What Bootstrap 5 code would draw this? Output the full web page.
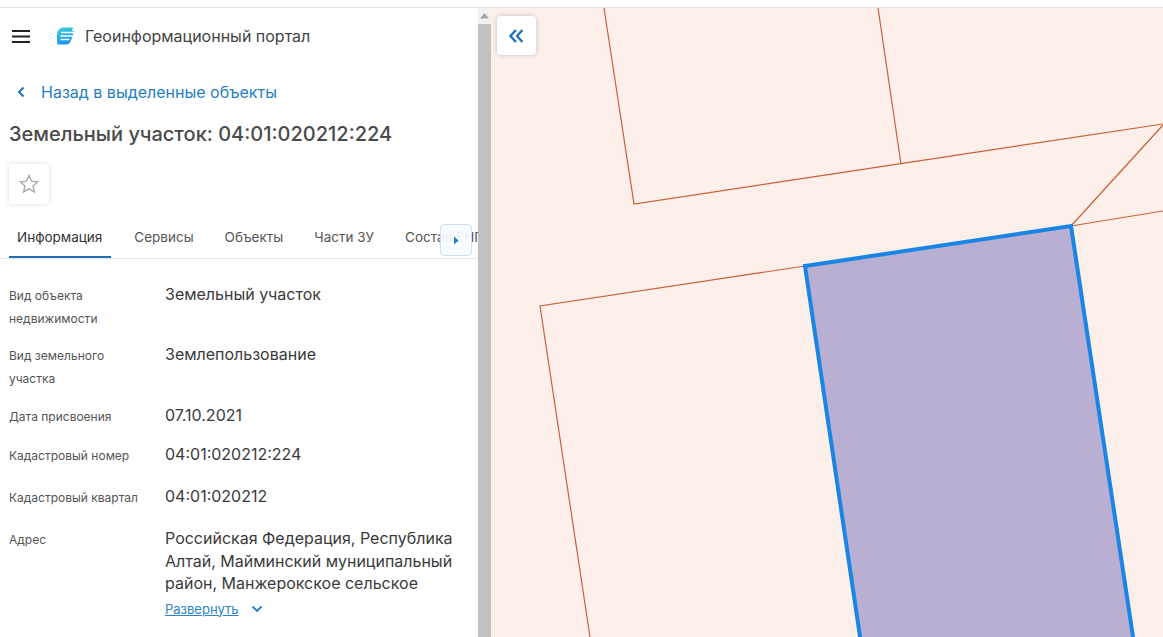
<!doctype html>
<html lang="ru">
<head>
  <meta charset="utf-8">
  <title>Геоинформационный портал</title>
  <link href="https://cdn.jsdelivr.net/npm/bootstrap@5.3.0/dist/css/bootstrap.min.css" rel="stylesheet">
  <style>
    html, body { height: 100%; overflow: hidden; }
    body { font-family: Inter, "Noto Sans", sans-serif; color: #333; background: #fff; }
    .top-strip { height: 8px; border-bottom: 1px solid #e3e3e3; }
    .app-body { height: 629px; }
    .side-panel { width: 478px; overflow: hidden; }
    .app-head { height: 56px; padding-left: 12px; }
    .app-title { font-size: 16px; color: #444; margin-left: 11px; }
    .logo-icon { margin-left: 26px; }
    .back-row { height: 40px; margin-top: 8px; padding-left: 16px; font-size: 16px; }
    .back-row a { color: #1f80c4; text-decoration: none; margin-left: 15px; }
    .obj-title { font-size: 20px; font-weight: 500; color: #4a4a4a; margin: 8px 0 0 9px; line-height: 28px; }
    .fav-btn { width: 40px; height: 40px; margin: 16px 0 0 9px; border-radius: 3px; box-shadow: 0 0 5px rgba(0,0,0,.14); }
    .tab-bar { height: 40px; margin-top: 15px; padding-left: 9px; gap: 15px; border-bottom: 1px solid #e6e9ec; white-space: nowrap; position: relative; overflow: hidden; }
    .tab-item { padding: 0 8px; font-size: 13.5px; line-height: 36px; height: 39px; color: #555; }
    .tab-item.is-active { color: #333; border-bottom: 2px solid #1f6fb5; padding-right: 9px; }
    .tab-next { position: absolute; right: 6px; top: 5px; width: 32px; height: 32px; background: rgba(247,251,255,.93); border: 1px solid #cfe2f5; border-radius: 4px; }
    .info-list { padding: 24px 0 0 9px; }
    .info-row { display: grid; grid-template-columns: 140px 1fr; column-gap: 16px; padding-right: 20px; margin-bottom: 13px; }
    .info-row.gap-s { margin-bottom: 14px; }
    .info-row.gap-m { margin-bottom: 14.5px; }
    .info-row.gap-l { margin-bottom: 17.5px; }
    .info-label { font-size: 12px; line-height: 22.5px; color: #555; padding-top: 2px; }
    .info-value { font-size: 16px; line-height: 22.5px; color: #3a3a3a; }
    .expand-row { margin-top: 3px; }
    .expand-link { font-size: 13px; color: #2a85c9; text-decoration: underline; }
    .fake-scroll { width: 13px; background: #f1f1f1; }
    .scroll-up { height: 16px; }
    .scroll-thumb { background: #c1c1c1; }
    .map-area { position: relative; background: #fdefe9; overflow: hidden; }
    .map-svg { position: absolute; left: 0; top: 0; }
    .collapse-btn { position: absolute; left: 6px; top: 8px; width: 39px; height: 39px; background: #fff; border-radius: 4px; box-shadow: 0 0 4px rgba(60,90,120,.3); }
  </style>
</head>
<body>
  <div class="top-strip"></div>
  <div class="app-body d-flex">
    <div class="side-panel">
      <div class="app-head d-flex align-items-center">
        <svg width="18" height="13" viewBox="0 0 18 13"><path d="M0 1h18M0 6.500h18M0 12h18" stroke="#222" stroke-width="2"/></svg>
        <svg class="logo-icon" width="18" height="18" viewBox="0 0 18 18">
          <defs><linearGradient id="lg" x1="0.200" y1="0" x2="0.600" y2="1"><stop offset="0" stop-color="#33d0d6"/><stop offset="1" stop-color="#1c8cf0"/></linearGradient></defs>
          <path d="M8 .5C5 .5 2.500 2 1.500 5 .7 8 .7 13 1.500 17.500H10c2.500 0 4-1.500 5-4l3-9.500-2 0 1-3.500z" fill="url(#lg)"/>
          <path d="M5 5.500h13M4.500 9h12M4.500 12.500h9" stroke="#fff" stroke-width="1.400"/>
        </svg>
        <span class="app-title">Геоинформационный портал</span>
      </div>
      <div class="back-row d-flex align-items-center">
        <svg width="10" height="12" viewBox="0 0 10 12"><path d="M7.500 1.500 3 6l4.500 4.500" fill="none" stroke="#1f6fb5" stroke-width="2"/></svg>
        <a href="#">Назад в выделенные объекты</a>
      </div>
      <div class="obj-title">Земельный участок: 04:01:020212:224</div>
      <div class="fav-btn d-flex align-items-center justify-content-center">
        <svg width="20" height="20" viewBox="0 0 20 20"><path d="M10 1.500l2.500 5.700 6.200.6-4.700 4.100 1.400 6.100L10 14.800 4.600 18l1.400-6.100L1.300 7.800l6.200-.6z" fill="none" stroke="#aaa" stroke-width="1.400"/></svg>
      </div>
      <div class="tab-bar d-flex">
        <div class="tab-item is-active">Информация</div>
        <div class="tab-item">Сервисы</div>
        <div class="tab-item">Объекты</div>
        <div class="tab-item">Части ЗУ</div>
        <div class="tab-item">Состав ЕНП</div>
        <div class="tab-next d-flex align-items-center justify-content-center">
          <svg width="6" height="9" viewBox="0 0 6 9"><path d="M1 .5 5.500 4.500 1 8.500z" fill="#1f7fd0"/></svg>
        </div>
      </div>
      <div class="info-list">
        <div class="info-row"><div class="info-label">Вид объекта недвижимости</div><div class="info-value">Земельный участок</div></div>
        <div class="info-row gap-s"><div class="info-label">Вид земельного участка</div><div class="info-value">Землепользование</div></div>
        <div class="info-row gap-m"><div class="info-label">Дата присвоения</div><div class="info-value">07.10.2021</div></div>
        <div class="info-row gap-l"><div class="info-label">Кадастровый номер</div><div class="info-value">04:01:020212:224</div></div>
        <div class="info-row gap-l"><div class="info-label">Кадастровый квартал</div><div class="info-value">04:01:020212</div></div>
        <div class="info-row"><div class="info-label">Адрес</div><div class="info-value">Российская Федерация, Республика Алтай, Майминский муниципальный район, Манжерокское сельское
          <div class="expand-row d-flex align-items-center gap-2"><a href="#" class="expand-link">Развернуть</a>
            <svg class="ms-1" width="12" height="8" viewBox="0 0 12 8"><path d="M1.500 1.500 6 6l4.500-4.500" fill="none" stroke="#1f80c4" stroke-width="1.800"/></svg></div>
        </div></div>
      </div>
    </div>
    <div class="fake-scroll d-flex flex-column">
      <div class="scroll-up d-flex align-items-center justify-content-center">
        <svg width="9" height="6" viewBox="0 0 9 6"><path d="M0 5.500 4.500 0 9 5.500z" fill="#a3a3a3"/></svg>
      </div>
      <div class="scroll-thumb flex-grow-1"></div>
    </div>
    <div class="map-area flex-grow-1">
      <!-- координаты экрана минус сдвиг карты (491, 8) -->
      <svg class="map-svg" width="672" height="629" viewBox="491 8 672 629">
        <g fill="none" stroke="#c9603a" stroke-width="1.200">
          <path d="M604 8 634 204 1163 124"/>
          <path d="M878 8 901 164"/>
          <path d="M1163 125 1071 226 1163 211"/>
          <path d="M805 266 540 306 590 637"/>
        </g>
        <path d="M805 266 1071 226 1135 650H862z" fill="#b8afd2" stroke="#1b85e6" stroke-width="4"/>
      </svg>
      <div class="collapse-btn d-flex align-items-center justify-content-center">
        <svg width="15" height="14" viewBox="0 0 15 14"><path d="M7 1 1.500 7 7 13M13.500 1 8 7l5.500 6" fill="none" stroke="#1f74c0" stroke-width="2.400"/></svg>
      </div>
    </div>
  </div>
  <script src="https://cdn.jsdelivr.net/npm/bootstrap@5.3.0/dist/js/bootstrap.bundle.min.js"></script>
</body>
</html>
